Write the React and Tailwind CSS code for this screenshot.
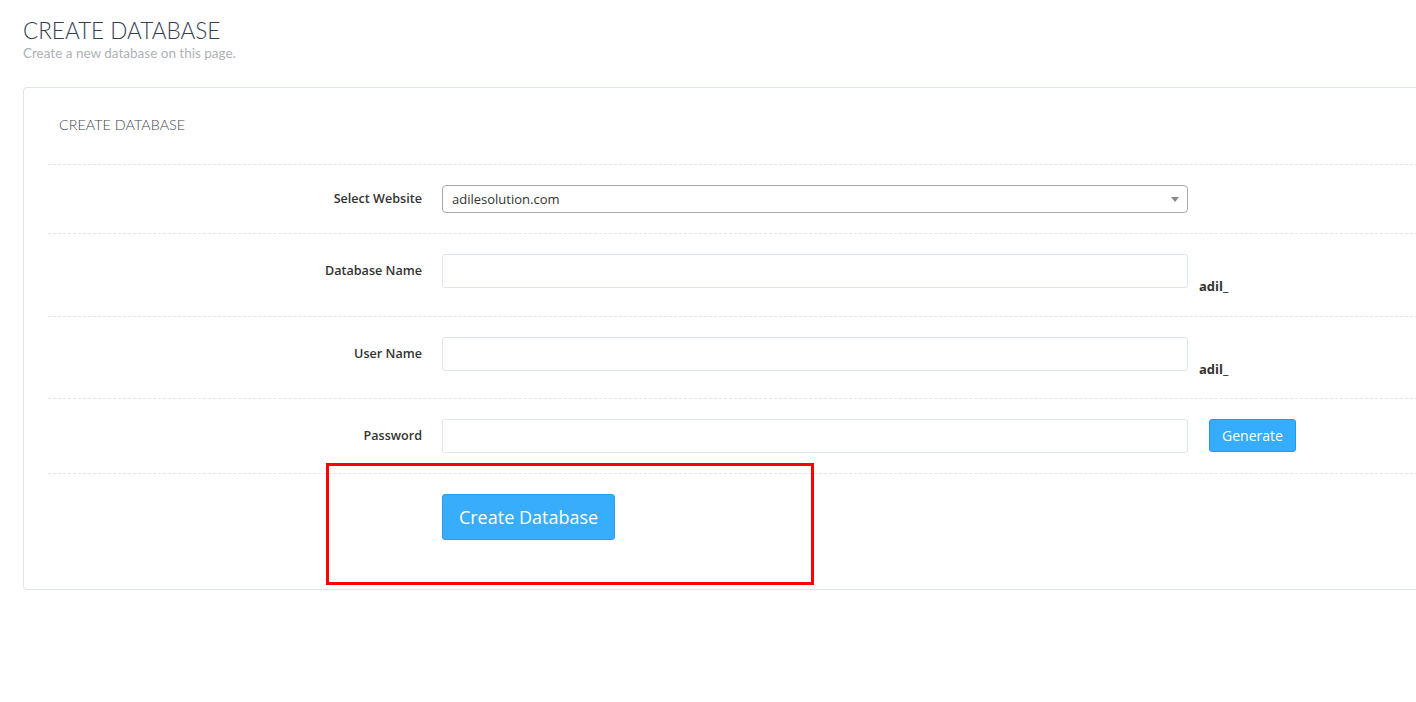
import React from 'react';

const FormRow = ({ label, children, pb = 'pb-[20px]' }) => (
  <div className={`flex items-start border-t border-dashed border-[#dfe6ee] pt-[20px] ${pb}`}>
    <label className="w-[374px] shrink-0 text-right text-[12.6px] font-semibold text-[#333] leading-[34px]">
      {label}
    </label>
    <div className="ml-[20px] flex items-start">{children}</div>
  </div>
);

const App = () => {
  return (
    <div className="relative min-h-screen w-full overflow-hidden bg-white" style={{ fontFamily: '"Open Sans", sans-serif' }}>
      <div className="pl-[23px] pt-[16px]">
        <h1 className="text-[22.5px] font-light leading-[30px] text-[#34404f]" style={{ fontFamily: 'Lato, sans-serif' }}>
          CREATE DATABASE
        </h1>
        <p className="-mt-[1px] text-[13.5px] leading-[16px] text-[#aeb2b8]" style={{ fontFamily: 'Lato, sans-serif' }}>
          Create a new database on this page.
        </p>

        <div className="mt-[26px] w-[1440px] rounded-[4px] border border-[#dde4ec] px-[24px] pt-[27px] pb-[23px]">
          <h2 className="mb-[29px] pl-[11px] text-[14.4px] font-light leading-[20px] text-[#3f4650]" style={{ fontFamily: 'Lato, sans-serif' }}>
            CREATE DATABASE
          </h2>

          <div className="flex items-center border-t border-dashed border-[#dfe6ee] pt-[20px] pb-[20px]">
            <label className="w-[374px] shrink-0 text-right text-[12.6px] font-semibold text-[#333] leading-[28px]">
              Select Website
            </label>
            <div className="ml-[20px] flex h-[28px] w-[746px] items-center justify-between rounded-[4px] border border-[#aaa] pl-[9px] pr-[8px] pt-[2px] text-[13px] text-[#333]">
              <span>adilesolution.com</span>
              <svg width="8" height="5" viewBox="0 0 8 5" className="-mt-[2px]">
                <path d="M0 0 L8 0 L4 5 Z" fill="#888" />
              </svg>
            </div>
          </div>

          <FormRow label="Database Name">
            <input className="h-[34px] w-[746px] rounded-[3px] border border-[#dde5ef] px-[10px] text-[13px] outline-none" />
            <span className="ml-[11px] mt-[22px] text-[13px] font-bold leading-[20px] text-[#333]">adil_</span>
          </FormRow>

          <FormRow label="User Name" pb="pb-[19px]">
            <input className="h-[34px] w-[746px] rounded-[3px] border border-[#dde5ef] px-[10px] text-[13px] outline-none" />
            <span className="ml-[11px] mt-[22px] text-[13px] font-bold leading-[20px] text-[#333]">adil_</span>
          </FormRow>

          <FormRow label="Password">
            <input type="password" className="h-[34px] w-[746px] rounded-[3px] border border-[#dde5ef] px-[10px] text-[13px] outline-none" />
            <button className="ml-[21px] h-[33px] w-[87px] rounded-[3px] border border-[#1e9bf0] bg-[#36acfc] text-[14px] text-white">
              Generate
            </button>
          </FormRow>

          <div className="border-t border-dashed border-[#dfe6ee] pt-[20px] pb-[26px] pl-[394px]">
            <button className="h-[46px] w-[173px] rounded-[3px] border border-[#22a0f2] bg-[#38adfc] text-[18px] text-white">
              Create Database
            </button>
          </div>
        </div>
      </div>

      {/* annotation box */}
      <div className="absolute left-[326px] top-[463px] h-[122px] w-[488px] border-[3px] border-[#ff0000]" />
    </div>
  );
};

export default App;
